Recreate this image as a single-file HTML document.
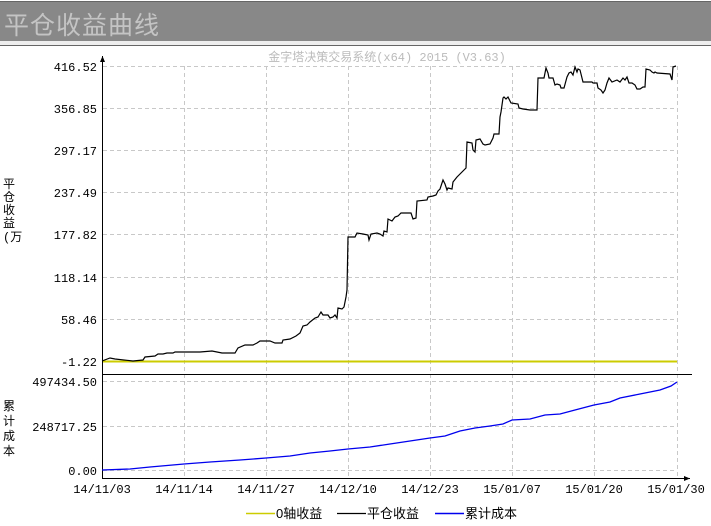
<!DOCTYPE html>
<html><head><meta charset="utf-8"><style>
body{margin:0;width:711px;height:526px;background:#fff;overflow:hidden;position:relative;font-family:"Liberation Sans","Noto Sans CJK SC",sans-serif}
#t{position:absolute;left:0;top:1px;width:711px;height:39px;background:#888;border-top:1px solid #666;border-bottom:1px solid #666}
#t span{position:absolute;left:4px;top:4px;font-size:25px;color:#c4c4c4;letter-spacing:1px}
#b{position:absolute;left:0;top:41px;width:711px;height:4px;background:#eee;border-bottom:1px solid #666}
</style></head><body>
<div id="t"><span>平仓收益曲线</span></div><div id="b"></div>
<svg width="711" height="526" style="position:absolute;left:0;top:0" font-family="Liberation Mono, Noto Sans CJK SC, monospace">
<text x="387" y="61" font-size="12" fill="#bbb" text-anchor="middle">金字塔决策交易系统(x64) 2015 (V3.63)</text>
<g stroke="#c8c8c8" stroke-dasharray="4,3" stroke-width="1" fill="none">
<path d="M103 66.5H677M103 108.5H677M103 150.5H677M103 192.5H677M103 234.5H677M103 277.5H677M103 319.5H677"/>
<path d="M103 381.5H677M103 426.5H677M103 470.5H677"/>
<path d="M184.5 66V478M266.5 66V478M348.5 66V478M430.5 66V478M512.5 66V478M594.5 66V478M677.5 66V478"/>
</g>
<g font-size="12" fill="#000" text-anchor="end">
<text x="97" y="71">416.52</text><text x="97" y="113">356.85</text><text x="97" y="155">297.17</text><text x="97" y="197">237.49</text><text x="97" y="239">177.82</text><text x="97" y="282">118.14</text><text x="97" y="324">58.46</text><text x="97" y="366">-1.22</text>
<text x="97" y="386">497434.50</text><text x="97" y="431">248717.25</text><text x="97" y="475">0.00</text>
</g>
<g font-size="12" fill="#000" text-anchor="middle">
<text x="102" y="493">14/11/03</text><text x="184" y="493">14/11/14</text><text x="266" y="493">14/11/27</text><text x="348" y="493">14/12/10</text><text x="430" y="493">14/12/23</text><text x="512" y="493">15/01/07</text><text x="594" y="493">15/01/20</text><text x="676" y="493">15/01/30</text>
</g>
<g font-size="12" fill="#000">
<text x="3" y="188">平</text><text x="3" y="201">仓</text><text x="3" y="214">收</text><text x="3" y="227">益</text><text x="3" y="241">(万</text>
<text x="3" y="410">累</text><text x="3" y="425">计</text><text x="3" y="440">成</text><text x="3" y="455">本</text>
</g>
<path d="M102.5 56V478M102 478.5H690M102 374.5H692" stroke="#000" fill="none"/>
<path d="M100 62L102.5 56L105 62Z M684 476L690 478.5L684 481Z" fill="#000"/>
<path d="M103 361.5H677" stroke="#cccc00" stroke-width="2"/>
<polyline fill="none" stroke="#000" stroke-width="1.2" points="102,361 110,358 115,359 133,361 143,360 145,357 155,356 158,354 163,354 167,353 173,353 175,352 200,352 212,351 222,353 235,353 238,348 245,345 253,345 257,343 260,341 270,341 275,343 282,343 283,340 290,339 296,336 300,333 303,326 307,325 310,322 315,318 318,317 321,312 323,315 328,315 330,318 333,317 335,315 337,318 338,308 342,309 344,307 346,297 347,290 348,237 355,237 357,233 363,234 368,235 369,240 371,234 377,233 380,234 383,236 384,231 387,232 388,219 392,221 395,217 398,216 401,213 411,213 413,219 416,218 417,201 427,200 428,197 433,196 436,195 438,191 440,189 442,183 443,180 445,184 447,190 448,188 452,189 453,182 457,177 460,174 464,170 466,168 467,142 472,143 473,150 475,152 476,140 480,139 483,144 485,145 490,144 493,138 494,134 499,134 500,117 501,112 503,98 504,97 506,99 508,97 511,103 518,104 519,108 523,109 530,110 537,110 538,78 544,78 546,68 548,73 549,78 553,78 555,85 557,84 560,85 561,88 564,88 567,77 569,73 571,72 573,75 575,67 577,72 578,69 580,70 583,82 592,82 593,83 597,83 598,88 601,90 603,93 605,90 607,83 609,78 612,82 617,80 620,82 623,78 625,80 627,77 629,83 632,83 635,85 637,89 640,89 643,87 645,87 646,69 650,70 652,72 654,73 655,72 657,73 670,74 672,80 673,67 676,66"/>
<polyline fill="none" stroke="#0000ee" stroke-width="1.3" points="102,470 130,469 150,467 184,464 210,462 240,460 266,458 290,456 310,453 330,451 348,449 370,447 390,444 410,441 430,438 445,436 460,431 475,428 490,426 503,424 512,420 530,419 545,415 560,414 575,410 594,405 610,402 620,398 640,394 660,390 671,386 677,382"/>
<path d="M246 513.5H275" stroke="#cccc00" stroke-width="1.5"/>
<path d="M337 513.5H366" stroke="#000" stroke-width="1.2"/>
<path d="M435 513.5H464" stroke="#0000ee" stroke-width="1.5"/>
<g font-size="13" fill="#000" font-family="Liberation Sans, Noto Sans CJK SC, sans-serif"><text x="276" y="518">0轴收益</text><text x="367" y="518">平仓收益</text><text x="465" y="518">累计成本</text></g>
</svg>
</body></html>
